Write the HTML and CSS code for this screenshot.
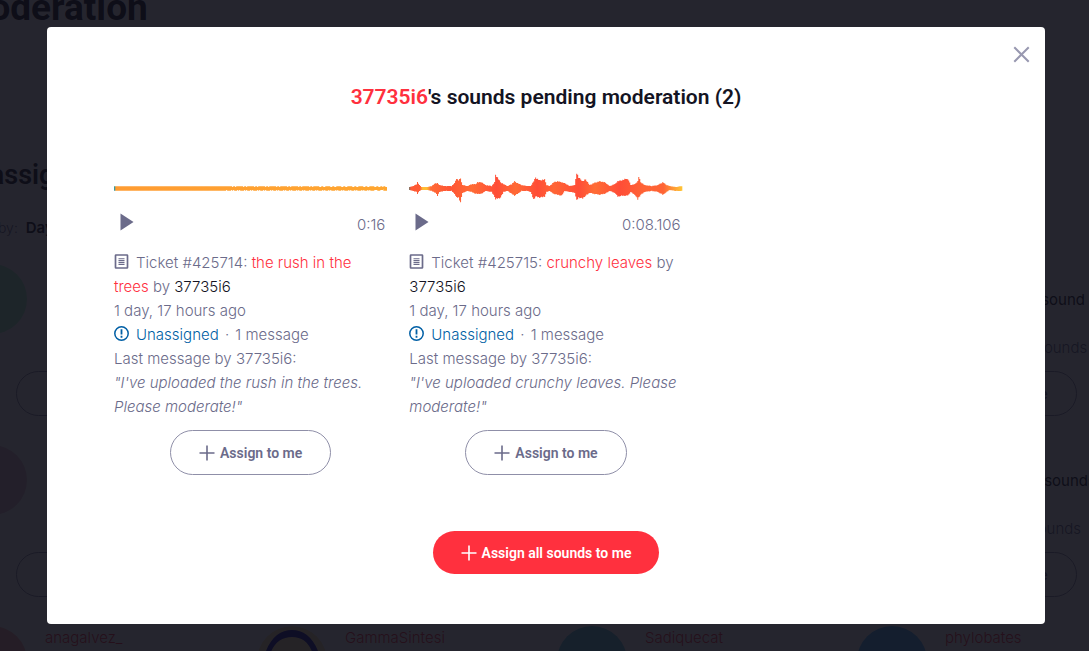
FILE: index.html
```
<!DOCTYPE html>
<html lang="en">
<head>
<meta charset="utf-8">
<title>Moderation</title>
<link rel="stylesheet" href="styles.css">
</head>
<body>
<svg class="sprite" aria-hidden="true">
  <symbol id="plus" viewBox="0 0 16 16"><path d="M8 .5v15M.5 8h15" fill="none" stroke="currentColor" stroke-width="1.6"/></symbol>
  <symbol id="play" viewBox="0 0 14 18"><path d="M.5.5 13.500 9 .5 17.500z" fill="currentColor"/></symbol>
  <symbol id="ticket" viewBox="0 0 14 15"><rect x="1" y="1" width="12" height="13" rx=".5" fill="none" stroke="currentColor" stroke-width="1.700"/><path d="M4 4.700h6M4 6.600h6M4 8.500h6M4 10.400h6" stroke="currentColor" stroke-width="1.100"/></symbol>
  <symbol id="alert" viewBox="0 0 15 15"><circle cx="7.500" cy="7.500" r="6.700" fill="none" stroke="currentColor" stroke-width="1.500"/><path d="M7.500 3.300v5.200M7.500 9.800v1.900" stroke="currentColor" stroke-width="1.800"/></symbol>
</svg>

<main class="page">
  <h1 class="page-title">Moderation</h1>
  <h2 class="section-title">Unassigned</h2>
  <p class="sort">Order by: <b>Day</b></p>
  <div class="users">
    <article class="user">
      <div class="user-row"><span class="avatar green"></span></div>
      <button class="btn" aria-label="Assign to me"><svg class="plus"><use href="#plus"/></svg></button>
    </article>
    <article class="user"></article>
    <article class="user"></article>
    <article class="user">
      <div class="user-row"><span class="avatar"></span><div><br><b>1 unassigned sound</b><br><br>Uploaded 12 sounds</div></div>
      <button class="btn"><svg class="plus"><use href="#plus"/></svg>Assign to me</button>
    </article>
    <article class="user">
      <div class="user-row"><span class="avatar face"></span></div>
      <button class="btn" aria-label="Assign to me"><svg class="plus"><use href="#plus"/></svg></button>
    </article>
    <article class="user"></article>
    <article class="user"></article>
    <article class="user">
      <div class="user-row"><span class="avatar"></span><div><br><b>2 unassigned sounds</b><br><br>Uploaded 5 sounds</div></div>
      <button class="btn"><svg class="plus"><use href="#plus"/></svg>Assign to me</button>
    </article>
    <article class="user"><div class="user-row"><span class="avatar red"></span><div><a href="#">anagalvez_</a></div></div></article>
    <article class="user"><div class="user-row"><svg class="avatar photo" viewBox="0 0 70 70"><circle cx="35" cy="35" r="35" fill="#ffe6aa"/><path d="M6 36C10 14 22 4 35 4s25 10 29 32h-6C55 20 48 11 35 11S14 20 11 36z" fill="#1414a0"/></svg><div><a href="#">GammaSintesi</a></div></div></article>
    <article class="user"><div class="user-row"><span class="avatar teal"></span><div><a href="#">Sadiquecat</a></div></div></article>
    <article class="user"><div class="user-row"><span class="avatar blue"></span><div><a href="#">phylobates</a></div></div></article>
  </div>
</main>

<div class="overlay">
  <section class="modal" role="dialog" aria-modal="true" aria-labelledby="modal-title">
    <button class="close" aria-label="Close"><svg viewBox="0 0 16 16"><path d="M1.200 1.200l13.600 13.600M14.800 1.200 1.200 14.800" fill="none" stroke="currentColor" stroke-width="1.900"/></svg></button>
    <h2 class="modal-title" id="modal-title"><a href="#">37735i6</a>'s sounds pending moderation (2)</h2>
    <div class="sounds">
      <article class="sound">
        <svg class="wave" id="wave-rush" viewBox="0 0 273 41" preserveAspectRatio="none">
          <defs><linearGradient id="rush" gradientUnits="userSpaceOnUse" x1="0" x2="273" y1="0" y2="0"><stop offset="0" stop-color="#3a9a9a"/><stop offset=".004" stop-color="#3a9a9a"/><stop offset=".006" stop-color="#ff9c32"/><stop offset="1" stop-color="#ffa630"/></linearGradient></defs>
          <path fill="none" stroke="url(#rush)"/>
        </svg>
        <div class="player"><button class="play" aria-label="Play"><svg><use href="#play"/></svg></button><span class="time">0:16</span></div>
        <div class="info">
          <p><svg class="ticket"><use href="#ticket"/></svg>Ticket #425714: <a href="#">the rush in the trees</a> by <a class="author" href="#">37735i6</a></p>
          <p>1 day, 17 hours ago</p>
          <p><span class="status"><svg class="alert"><use href="#alert"/></svg>Unassigned</span> <span class="dot">·</span> 1 message</p>
          <p>Last message by 37735i6:</p>
          <p><em>"I've uploaded the rush in the trees. Please moderate!"</em></p>
        </div>
        <button class="btn"><svg class="plus"><use href="#plus"/></svg>Assign to me</button>
      </article>
      <article class="sound">
        <svg class="wave" id="wave-leaves" viewBox="0 0 273 41" preserveAspectRatio="none">
          <defs><linearGradient id="leaves" gradientUnits="userSpaceOnUse" x1="0" x2="273" y1="0" y2="0"><stop offset="0" stop-color="#6a7a70"/><stop offset=".007" stop-color="#ff5a35"/><stop offset=".04" stop-color="#ff5a35"/><stop offset=".05" stop-color="#ffbd35"/><stop offset=".065" stop-color="#ffbd35"/><stop offset=".08" stop-color="#ff6a35"/><stop offset=".15" stop-color="#ff5535"/><stop offset=".23" stop-color="#ff6c35"/><stop offset=".32" stop-color="#ff4d37"/><stop offset=".39" stop-color="#ff6a35"/><stop offset=".47" stop-color="#ff4d37"/><stop offset=".53" stop-color="#ff6535"/><stop offset=".62" stop-color="#ff4d37"/><stop offset=".68" stop-color="#ff6c35"/><stop offset=".77" stop-color="#ff4d37"/><stop offset=".86" stop-color="#ff6335"/><stop offset=".93" stop-color="#ff6335"/><stop offset=".97" stop-color="#ff9d35"/><stop offset="1" stop-color="#ffc635"/></linearGradient></defs>
          <path fill="none" stroke="url(#leaves)"/>
        </svg>
        <div class="player"><button class="play" aria-label="Play"><svg><use href="#play"/></svg></button><span class="time">0:08.106</span></div>
        <div class="info">
          <p><svg class="ticket"><use href="#ticket"/></svg>Ticket #425715: <a href="#">crunchy leaves</a> by <a class="author" href="#">37735i6</a></p>
          <p>1 day, 17 hours ago</p>
          <p><span class="status"><svg class="alert"><use href="#alert"/></svg>Unassigned</span> <span class="dot">·</span> 1 message</p>
          <p>Last message by 37735i6:</p>
          <p><em>"I've uploaded crunchy leaves. Please moderate!"</em></p>
        </div>
        <button class="btn"><svg class="plus"><use href="#plus"/></svg>Assign to me</button>
      </article>
    </div>
    <button class="btn primary"><svg class="plus"><use href="#plus"/></svg>Assign all sounds to me</button>
  </section>
</div>
<script src="wave.js"></script>
</body>
</html>
```
FILE: wave.js
```
// Envelope key points: [x, height above centre, depth below centre]
const leaves = [[0,1,1],[4,2,2],[7,4,3],[8,6,5],[10,3,2],[12,1,1],[18,1,1],[22,2,2],[26,5,4],[28,5,7],[30,3,3],[35,2,2],[42,2,2],[45,5,5],[47,10,9],[49,8,9],[51,10,14],[53,3,4],[58,2,2],[62,4,3],[66,4,5],[68,6,5],[72,6,5],[76,3,2],[82,2,3],[85,6,8],[86,14,11],[88,11,10],[91,6,9],[94,4,3],[98,2,2],[102,4,5],[105,7,7],[108,5,5],[112,3,2],[118,2,2],[121,2,3],[124,7,11],[126,11,8],[130,8,9],[135,9,8],[137,3,3],[140,2,2],[144,6,5],[148,7,6],[152,6,7],[155,5,2],[160,2,3],[165,3,4],[167,16,12],[169,11,9],[173,7,10],[176,9,7],[180,3,4],[184,5,5],[190,7,6],[195,6,5],[200,2,2],[205,4,4],[208,7,8],[212,8,7],[217,10,7],[219,8,6],[221,3,3],[225,4,6],[228,7,11],[229,12,9],[231,6,6],[235,3,3],[242,2,2],[248,3,3],[253,6,6],[257,3,3],[260,2,1],[266,1,2],[273,2,2]];
const centre = 20.5;

function bars(height) {
  let d = '';
  for (let x = 0; x < 273; x++) {
    const [up, down] = height(x);
    d += `M${x + .5} ${centre - up}V${centre + down}`;
  }
  return d;
}

function leavesHeight(x) {
  const i = leaves.findIndex((p, n) => x >= p[0] && x < leaves[n + 1][0]);
  const a = leaves[i], b = leaves[i + 1];
  const t = (x - a[0]) / (b[0] - a[0]);
  const ripple = 1 - (x * 7 % 5) * .03;
  return [(a[1] + (b[1] - a[1]) * t) * ripple + .6, (a[2] + (b[2] - a[2]) * t) * ripple + .6];
}

function rushHeight(x) {
  const thin = x > 110 && (x * x + 3 * x) % 11 < (x - 80) / 30;
  const low = x > 110 && (x * x + 5 * x) % 13 < (x - 80) / 30;
  return [thin ? 1.5 : 2.2, low ? 1.4 : 2.2];
}

document.querySelector('#wave-leaves > path').setAttribute('d', bars(leavesHeight));
document.querySelector('#wave-rush > path').setAttribute('d', bars(rushHeight));
```
FILE: styles.css
```
* { box-sizing: border-box; }
body {
  margin: 0;
  height: 100vh;
  overflow: hidden;
  font: 300 15px/24px Inter, "Liberation Sans", sans-serif;
  color: #6b6b8a;
  background: #fff;
}
h1, h2, p { margin: 0; }
a { color: #ff303e; text-decoration: none; }
em { font-style: italic; }
.sprite { display: none; }

.page { margin-left: -43px; height: 100vh; overflow: hidden; }
.page-title { font: 700 37px/40px Roboto, sans-serif; color: #141423; padding-top: 0; margin-top: -12px; }
.section-title { font: 600 27px/32px Roboto, sans-serif; color: #141423; margin-top: 131px; }
.sort { margin-top: 25px; font-size: 14px; }
.sort b { margin-left: 4px; font: 600 15px/24px Inter, sans-serif; color: #141423; }
.users {
  display: grid;
  grid-template-columns: repeat(4, 278px);
  gap: 29px 22px;
  grid-auto-rows: minmax(152px, auto);
  margin-top: 24px;
}
.user { display: flex; flex-direction: column; align-items: center; justify-content: space-between; }
.user-row { display: flex; gap: 18px; align-self: stretch; white-space: nowrap; }
.user-row b { font-weight: 400; color: #141423; }
.avatar { width: 70px; height: 70px; border-radius: 50%; flex: none; }
.green { background: #aaffc8; }
.face { background: #e4c4d0; }
.red { background: #ffb0a8; }
.teal { background: #64c8dc; }
.blue { background: #50b4ff; }

.overlay {
  position: fixed;
  inset: 0;
  padding: 27px 44px 27px 47px;
  background: rgba(13, 13, 23, .9);
  overflow: auto;
}
.modal {
  position: relative;
  display: flex;
  flex-direction: column;
  align-items: center;
  padding: 57px 67px 50px;
  border-radius: 4px;
  background: #fff;
}
.close {
  position: absolute;
  top: 19px;
  right: 15px;
  padding: 0;
  border: 0;
  background: none;
  color: #9898b0;
}
.close svg { display: block; width: 17px; height: 17px; }
.modal-title { font: 600 21px/26px Roboto, sans-serif; color: #141423; }
.sounds {
  align-self: stretch;
  display: grid;
  grid-template-columns: repeat(3, 1fr);
  column-gap: 22px;
  margin: 58px 0 56px;
}
.sound { display: flex; flex-direction: column; align-items: center; }
.wave { display: block; width: 100%; height: 41px; }
.player { align-self: stretch; display: flex; justify-content: space-between; height: 28px; margin-bottom: 14px; padding: 0 2px 0 6px; }
.play { align-self: flex-start; padding: 4px 0; border: 0; background: none; color: #6b6b8a; }
.play svg { display: block; width: 14px; height: 18px; }
.time { align-self: flex-end; }
.info { align-self: stretch; margin-bottom: 11px; }
.author { color: #141423; }
.status { color: #005fa5; }
.ticket, .alert { width: 15px; height: 15px; margin-right: 7px; vertical-align: -1px; }
.dot { margin: 0 2px; }
.btn {
  display: inline-flex;
  align-items: center;
  justify-content: center;
  gap: 5px;
  height: 45px;
  min-width: 161px;
  padding: 0 28px;
  border: 1px solid #8f8fa8;
  border-radius: 23px;
  background: none;
  color: #6b6b8a;
  font: 600 14px/24px Roboto, sans-serif;
}
.plus { width: 16px; height: 16px; }
.primary { height: 43px; border: 0; background: #ff303e; color: #fff; }
```
